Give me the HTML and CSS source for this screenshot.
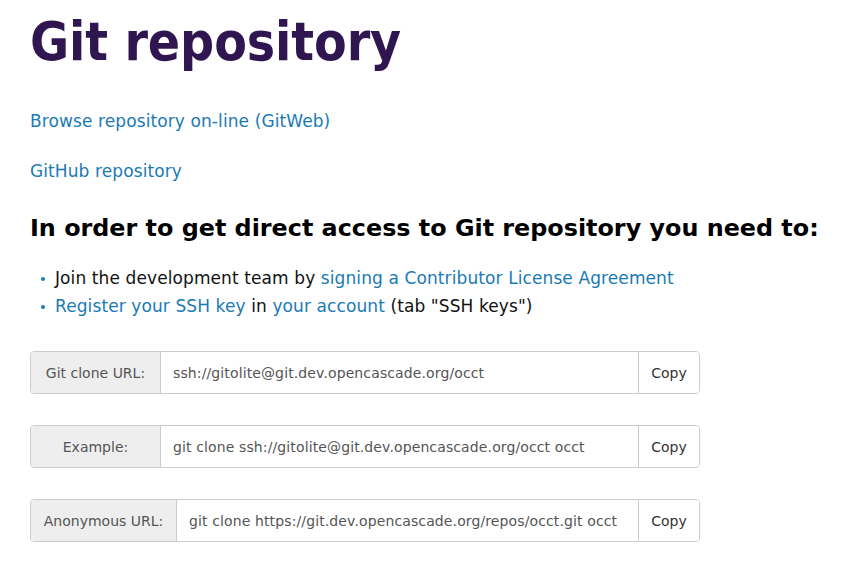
FILE: index.html
```html
<!DOCTYPE html>
<html>
<head>
<meta charset="utf-8">
<title>Git repository</title>
<link rel="stylesheet" href="styles.css">
</head>
<body>
<main class="page">
  <h1 class="title">Git repository</h1>
  <p class="link-line"><a href="#">Browse repository on-line (GitWeb)</a></p>
  <p class="link-line"><a href="#">GitHub repository</a></p>
  <h2 class="subtitle">In order to get direct access to Git repository you need to:</h2>
  <ul class="steps">
    <li>Join the development team by <a href="#">signing a Contributor License Agreement</a></li>
    <li><a href="#">Register your SSH key</a> in <a href="#">your account</a> (tab "SSH keys")</li>
  </ul>
  <div class="groups">
    <div class="input-group">
      <span class="addon">Git clone URL:</span>
      <span class="field">ssh://gitolite@git.dev.opencascade.org/occt</span>
      <button class="copy">Copy</button>
    </div>
    <div class="input-group">
      <span class="addon">Example:</span>
      <span class="field">git clone ssh://gitolite@git.dev.opencascade.org/occt occt</span>
      <button class="copy">Copy</button>
    </div>
    <div class="input-group">
      <span class="addon addon-wide">Anonymous URL:</span>
      <span class="field">git clone https://git.dev.opencascade.org/repos/occt.git occt</span>
      <button class="copy">Copy</button>
    </div>
  </div>
</main>
</body>
</html>
```

FILE: styles.css
```css
html, body {
  margin: 0;
  padding: 0;
  background: #fff;
}
body {
  font-family: "DejaVu Sans", Verdana, sans-serif;
  font-size: 17px;
  letter-spacing: 0.1px;
  color: #111;
}
.page {
  padding: 0 0 0 30px;
}
a {
  color: #1a7ab5;
  text-decoration: none;
}
.title {
  margin: 0;
  padding-top: 12px;
  font-family: "DejaVu Sans Condensed", "DejaVu Sans", sans-serif;
  font-size: 53px;
  font-weight: bold;
  letter-spacing: -0.1px;
  line-height: 60px;
  color: #2f1650;
}
.link-line {
  margin: 0;
  line-height: 24px;
}
.link-line:first-of-type {
  margin-top: 37px;
}
.link-line + .link-line {
  margin-top: 26px;
}
.subtitle {
  margin: 29px 0 0;
  font-family: "DejaVu Sans", sans-serif;
  font-size: 23.85px;
  letter-spacing: 0;
  font-weight: bold;
  line-height: 32px;
  color: #000;
}
.steps {
  list-style: none;
  margin: 20px 0 0;
  padding: 0 0 0 25px;
}
.steps li {
  position: relative;
  line-height: 28px;
}
.steps li::before {
  content: "";
  position: absolute;
  left: -14px;
  top: 13px;
  width: 4px;
  height: 4px;
  border-radius: 50%;
  background: #1a7ab5;
}
.groups {
  margin-top: 31px;
  display: flex;
  flex-direction: column;
  gap: 31px;
  width: 670px;
}
.input-group {
  display: flex;
  height: 43px;
  box-sizing: border-box;
  border: 1px solid #ccc;
  border-radius: 4px;
  font-size: 14px;
  letter-spacing: 0.12px;
  color: #555;
  overflow: hidden;
}
.addon {
  flex: 0 0 129px;
  background: #eee;
  border-right: 1px solid #ccc;
  display: flex;
  align-items: center;
  justify-content: center;
  letter-spacing: 0;
}
.addon-wide {
  flex-basis: 145px;
}
.field {
  flex: 1;
  display: flex;
  align-items: center;
  padding-left: 12px;
  color: #555;
  white-space: nowrap;
}
.copy {
  flex: 0 0 61px;
  border: 0;
  border-left: 1px solid #ccc;
  background: #fff;
  font-family: inherit;
  font-size: 14px;
  letter-spacing: 0;
  color: #333;
  padding: 0;
}
```
